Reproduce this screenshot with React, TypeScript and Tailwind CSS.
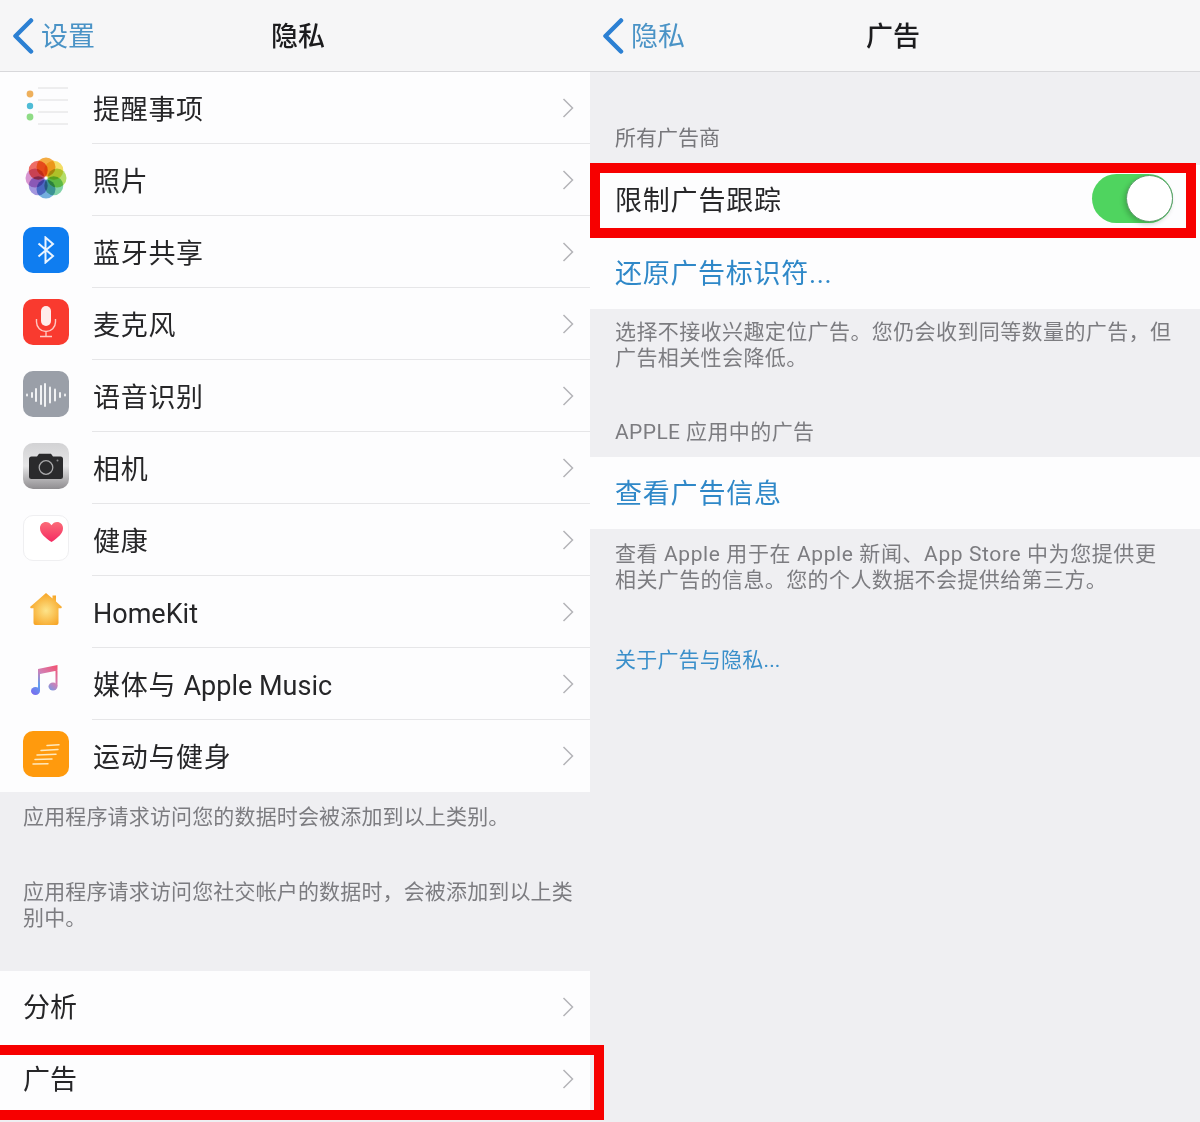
import type { ReactNode } from "react";

function RemindersIcon() {
  return (
    <svg width="46" height="46" viewBox="0 0 46 46" className="bg-[#fdfdfe]">
      <path d="M15 5h30M15 17h30M15 29h30M15 41h30" stroke="#dededf" strokeWidth="1" />
      <circle cx="7" cy="11" r="3.4" fill="#eeb05c" />
      <circle cx="7" cy="23" r="3.2" fill="#4fbcd6" />
      <circle cx="7" cy="34" r="3.4" fill="#8fdc86" />
    </svg>
  );
}

function PhotosIcon() {
  const petals = ["#f5a52e", "#f5dc55", "#aedb55", "#74cfa0", "#66a8dc", "#9a8cdc", "#d489cc", "#ee5f55"];
  return (
    <svg width="46" height="46" viewBox="0 0 46 46">
      {petals.map((color, i) => (
        <circle
          key={color}
          cx="23"
          cy="12"
          r="9.500"
          fill={color}
          fillOpacity="0.9"
          className="mix-blend-multiply"
          transform={`rotate(${i * 45} 23 23)`}
        />
      ))}
    </svg>
  );
}

function BluetoothIcon() {
  return (
    <div className="flex h-[46px] w-[46px] items-center justify-center rounded-[10px] bg-[#0f7df0]">
      <svg width="20" height="28" viewBox="0 0 20 28" fill="none" stroke="#eaf4ff" strokeWidth="2">
        <path d="M2.500 7.500 17 20l-7.500 6.500v-25L17 8 2.500 20.500" />
      </svg>
    </div>
  );
}

function MicIcon() {
  return (
    <div className="flex h-[46px] w-[46px] items-center justify-center rounded-[10px] bg-[#f93a2f]">
      <svg width="24" height="32" viewBox="0 0 24 32" fill="none">
        <rect x="7" y="0" width="10" height="20" rx="5" fill="#ffecea" />
        <path d="M2.500 13v3a9.500 9.500 0 0 0 19 0v-3M12 26v4M6 30.500h12" stroke="#ffc9c4" strokeWidth="1.400" />
      </svg>
    </div>
  );
}

function VoiceIcon() {
  const bars = [
    [4, 3], [9, 6], [13, 14], [18, 20], [22, 24], [27, 17], [32, 13], [37, 6], [42, 3],
  ];
  return (
    <div className="h-[46px] w-[46px] rounded-[10px] bg-[#9a9fa8]">
      <svg width="46" height="46" viewBox="0 0 46 46">
        {bars.map(([x, h]) => (
          <rect key={x} x={x - 1} y={24 - h / 2} width="2" height={h} rx="1" fill="#f1f2f4" />
        ))}
      </svg>
    </div>
  );
}

function CameraIcon() {
  return (
    <div className="flex h-[46px] w-[46px] items-center justify-center rounded-[10px] bg-gradient-to-b from-[#d2d2d4] via-[#e6e6e7] to-[#8f8d90]">
      <svg width="34" height="26" viewBox="0 0 34 26">
        <path
          d="M2.500 3.500H8L10 .8h12l2 2.700h7.500A2.500 2.500 0 0 1 34 6v17.500a2.500 2.500 0 0 1-2.500 2.500h-29A2.500 2.500 0 0 1 0 23.500V6a2.500 2.500 0 0 1 2.500-2.500Z"
          fill="#2a2a2c"
        />
        <circle cx="17" cy="14.500" r="6.800" fill="none" stroke="#a9a9ab" strokeWidth="1.300" />
        <circle cx="28.500" cy="7.500" r="1" fill="#8c8c8e" />
      </svg>
    </div>
  );
}

function HealthIcon() {
  return (
    <div className="flex h-[46px] w-[46px] items-start justify-end rounded-[10px] border border-[#efeff1] bg-white pr-[5px] pt-[6px]">
      <svg width="23" height="20" viewBox="0 0 23 20">
        <defs>
          <linearGradient id="heart" x1="0" y1="0" x2="0" y2="1">
            <stop offset="0" stopColor="#fb6c78" />
            <stop offset="1" stopColor="#f52a62" />
          </linearGradient>
        </defs>
        <path
          d="M11.500 20C5 15.500 0 11.500 0 6.200 0 2.500 2.700 0 5.900 0c2.300 0 4.300 1.200 5.600 3.300C12.800 1.200 14.800 0 17.100 0 20.300 0 23 2.500 23 6.200 23 11.500 18 15.500 11.500 20Z"
          fill="url(#heart)"
        />
      </svg>
    </div>
  );
}

function HomeIcon() {
  return (
    <svg width="46" height="46" viewBox="0 0 46 46">
      <defs>
        <radialGradient id="home" cx="0.5" cy="0.55" r="0.55">
          <stop offset="0" stopColor="#fde48a" />
          <stop offset="1" stopColor="#f7a526" />
        </radialGradient>
      </defs>
      <path
        d="M23 6 29.500 11.500V8.500h3.500v6l6 5.500-.8 1.200H35.500v14.800a2 2 0 0 1-2 2h-21a2 2 0 0 1-2-2V21.200H7.800L7 20Z"
        fill="url(#home)"
      />
    </svg>
  );
}

function MusicIcon() {
  return (
    <svg width="46" height="46" viewBox="0 0 46 46">
      <defs>
        <linearGradient id="note" gradientUnits="userSpaceOnUse" x1="34" y1="6" x2="10" y2="36">
          <stop offset="0" stopColor="#f4506f" />
          <stop offset="0.4" stopColor="#d27fb4" />
          <stop offset="0.7" stopColor="#5fa0f0" />
          <stop offset="1" stopColor="#7a68ee" />
        </linearGradient>
      </defs>
      <path d="M15 10 34.500 6v5.500L17 15v17h-2ZM32.500 9h2v18h-2Z" fill="url(#note)" />
      <ellipse cx="12.500" cy="32" rx="4.500" ry="4" fill="url(#note)" />
      <ellipse cx="30" cy="27.500" rx="4.500" ry="4" fill="url(#note)" />
    </svg>
  );
}

function FitnessIcon() {
  return (
    <div className="flex h-[46px] w-[46px] items-center justify-center rounded-[10px] bg-[#ff9a0d]">
      <svg width="28" height="21" viewBox="0 0 28 21" fill="none" stroke="#ffe9bd" strokeLinecap="round" strokeWidth="1.500">
        <path d="M15 1.500 27 .8" />
        <path d="M9 6.500 26 5.500" />
        <path d="M5 11 24 10.200" />
        <path d="M3 15.500 20 15" />
        <path d="M1 20 16 19.800" />
      </svg>
    </div>
  );
}

const privacyRows: { id: string; label: ReactNode; icon: ReactNode }[] = [
  { id: "reminders", label: "提醒事项", icon: <RemindersIcon /> },
  { id: "photos", label: "照片", icon: <PhotosIcon /> },
  { id: "bluetooth", label: "蓝牙共享", icon: <BluetoothIcon /> },
  { id: "mic", label: "麦克风", icon: <MicIcon /> },
  { id: "speech", label: "语音识别", icon: <VoiceIcon /> },
  { id: "camera", label: "相机", icon: <CameraIcon /> },
  { id: "health", label: "健康", icon: <HealthIcon /> },
  { id: "homekit", label: <span className="tracking-normal">HomeKit</span>, icon: <HomeIcon /> },
  {
    id: "music",
    label: (
      <>
        媒体与 <span className="tracking-normal">Apple Music</span>
      </>
    ),
    icon: <MusicIcon />,
  },
  { id: "fitness", label: "运动与健身", icon: <FitnessIcon /> },
];

function Chevron() {
  return (
    <svg width="12" height="20" viewBox="0 0 12 20" fill="none" stroke="#b4b4b8" strokeWidth="1.500" className="shrink-0">
      <path d="M1.500 1 10.500 10l-9 9" />
    </svg>
  );
}

function NavBar({ back, title, titleClass }: { back: string; title: string; titleClass: string }) {
  return (
    <div className="relative flex h-[72px] items-center border-b border-[#d8d8db] bg-[#f6f6f7]">
      <svg width="22" height="36" viewBox="0 0 22 36" fill="none" stroke="#2c80d3" strokeWidth="4.500" strokeLinecap="round" strokeLinejoin="round" className="ml-[12px] shrink-0">
        <path d="M19 2.500 3.500 18 19 33.500" />
      </svg>
      <span className="ml-[7px] pt-[3px] text-[27px] leading-none text-[#4a93c6]">{back}</span>
      <span className={`absolute top-[22px] text-[27px] font-medium leading-[30px] text-[#1c1c1e] ${titleClass}`}>{title}</span>
    </div>
  );
}

function Note({ children, tight }: { children: ReactNode; tight?: boolean }) {
  return (
    <p className={`whitespace-nowrap text-[21px] leading-[26px] text-[#7c7c80] ${tight ? "tracking-[0.15px]" : "tracking-[0.4px]"}`}>
      {children}
    </p>
  );
}

function Toggle() {
  return (
    <span className="mb-[5px] flex h-[49px] w-[81px] items-center justify-end rounded-full bg-[#4fd45f]">
      <span className="h-[47px] w-[47px] rounded-full border border-[#5d9b6c] bg-white shadow-[-2px_2px_5px_rgba(0,0,0,0.2)]" />
    </span>
  );
}

export default function App() {
  return (
    <div className="relative flex h-[1122px] w-[1200px] overflow-hidden bg-[#efeff2] font-['Roboto','Noto_Sans_CJK_SC',sans-serif]">
      <div className="flex w-[590px] flex-col">
        <NavBar back="设置" title="隐私" titleClass="left-[271px]" />
        <div className="bg-[#fdfdfe]">
          {privacyRows.map((row, i) => (
            <div key={row.id} className="flex h-[72px] items-center pl-[23px]">
              <div className="mb-[4px] w-[46px] shrink-0">{row.icon}</div>
              <div className={`ml-[23px] flex h-full flex-1 items-center pr-[16px] ${i < privacyRows.length - 1 ? "border-b border-[#e6e6e8]" : ""}`}>
                <span className="flex-1 pl-[1px] pt-[5px] text-[27px] tracking-[0.7px] text-[#262628]">{row.label}</span>
                <Chevron />
              </div>
            </div>
          ))}
        </div>
        <div className="h-[179px] px-[23px] pt-[12px]">
          <Note tight>应用程序请求访问您的数据时会被添加到以上类别。</Note>
          <div className="mt-[49px]">
            <Note tight>
              应用程序请求访问您社交帐户的数据时，会被添加到以上类
              <br />
              别中。
            </Note>
          </div>
        </div>
        <div className="bg-[#fdfdfe]">
          {["分析", "广告"].map((label) => (
            <div key={label} className="flex h-[72px] items-center pl-[23px] pr-[16px]">
              <span className="flex-1 pt-[2px] text-[27px] text-[#262628]">{label}</span>
              <Chevron />
            </div>
          ))}
        </div>
      </div>

      <div className="flex flex-1 flex-col">
        <NavBar back="隐私" title="广告" titleClass="left-[276px]" />
        <div className="flex h-[93px] items-end px-[25px] pb-[14px]">
          <span className="text-[21px] leading-[26px] text-[#77777b]">所有广告商</span>
        </div>
        <div className="flex h-[72px] items-center justify-between bg-[#fdfdfe] pl-[25px] pr-[27px]">
          <span className="text-[27px] tracking-[0.8px] text-[#262628]">限制广告跟踪</span>
          <Toggle />
        </div>
        <div className="flex h-[72px] items-center bg-[#fdfdfe] px-[25px]">
          <span className="pt-[2px] text-[27px] tracking-[0.7px] text-[#2f88c8]">还原广告标识符...</span>
        </div>
        <div className="px-[25px] pt-[10px]">
          <Note>
            选择不接收兴趣定位广告。您仍会收到同等数量的广告，但
            <br />
            广告相关性会降低。
          </Note>
          <div className="mb-[12px] mt-[48px]">
            <Note>APPLE 应用中的广告</Note>
          </div>
        </div>
        <div className="flex h-[72px] items-center bg-[#fdfdfe] px-[25px]">
          <span className="pt-[3px] text-[27px] tracking-[0.8px] text-[#2f88c8]">查看广告信息</span>
        </div>
        <div className="px-[25px] pt-[12px]">
          <Note>
            <span className="tracking-[0.6px]">查看 Apple 用于在 Apple 新闻、App Store 中为您提供更</span>
            <br />
            相关广告的信息。您的个人数据不会提供给第三方。
          </Note>
          <p className="mt-[54px] text-[21px] leading-[26px] tracking-[0.2px] text-[#3a8fca]">关于广告与隐私...</p>
        </div>
      </div>

      <div className="absolute left-0 top-[1045px] h-[75px] w-[604px] border-[10px] border-l-0 border-[#f70000]" />
      <div className="absolute left-[590px] top-[163px] h-[75px] w-[606px] border-[10px] border-[#f70000]" />
    </div>
  );
}
